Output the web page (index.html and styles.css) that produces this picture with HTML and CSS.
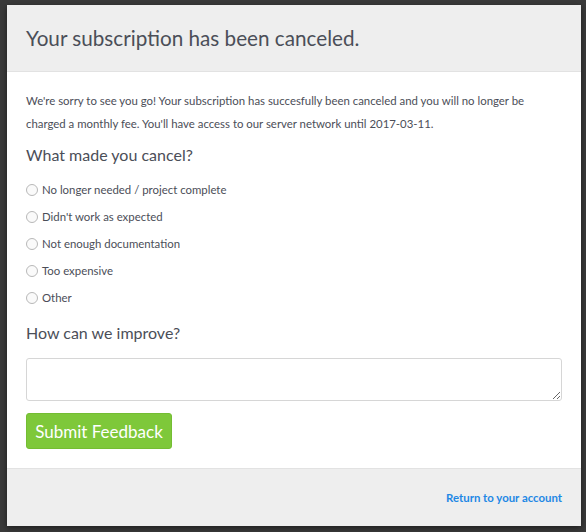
FILE: index.html
```html
<!DOCTYPE html>
<html>
<head>
<meta charset="utf-8">
<link rel="stylesheet" href="styles.css">
</head>
<body>
<div class="backdrop">
  <div class="modal">
    <div class="modal-header">
      <h1 class="title">Your subscription has been canceled.</h1>
    </div>
    <div class="modal-body">
      <p class="intro">We're sorry to see you go! Your subscription has succesfully been canceled and you will no longer be charged a monthly fee. You'll have access to our server network until 2017-03-11.</p>
      <h2 class="question first">What made you cancel?</h2>
      <ul class="reasons">
        <li class="reason"><span class="radio"></span><span class="reason-label">No longer needed / project complete</span></li>
        <li class="reason"><span class="radio"></span><span class="reason-label">Didn't work as expected</span></li>
        <li class="reason"><span class="radio"></span><span class="reason-label">Not enough documentation</span></li>
        <li class="reason"><span class="radio"></span><span class="reason-label">Too expensive</span></li>
        <li class="reason"><span class="radio"></span><span class="reason-label">Other</span></li>
      </ul>
      <h2 class="question improve">How can we improve?</h2>
      <textarea class="feedback"></textarea>
      <button class="submit">Submit Feedback</button>
    </div>
    <div class="modal-footer">
      <a class="return-link" href="#">Return to your account</a>
    </div>
  </div>
</div>
</body>
</html>
```

FILE: styles.css
```css
* { box-sizing: border-box; }
html, body {
  margin: 0;
  padding: 0;
  background: #3a3a3a;
  width: 586px;
  height: 532px;
  overflow: hidden;
}
.backdrop {
  padding: 5px 5px 0 7px;
  font-family: Lato, "Liberation Sans", sans-serif;
}
.modal {
  width: 574px;
  height: 521px;
  background: #fff;
  display: flex;
  flex-direction: column;
  box-shadow: 0 2px 6px rgba(0,0,0,0.5);
}
.modal-header {
  height: 67px;
  background: #eeeeee;
  border-bottom: 1px solid #e2e2e2;
  padding: 0 19px;
  display: flex;
  align-items: center;
}
.title {
  margin: 0;
  font-size: 20.7px;
  font-weight: 400;
  color: #4b4e58;
}
.modal-body {
  flex: 1;
  padding: 17px 19px 0 19px;
  color: #4b4e58;
}
.intro {
  margin: 0;
  font-size: 11.4px;
  line-height: 23px;
}
.question {
  margin: 8px 0 8px;
  font-size: 16px;
  font-weight: 400;
  line-height: 24px;
}
.first {
  margin-bottom: 9px;
}
.reasons {
  list-style: none;
  margin: 0;
  padding: 0;
}
.reason {
  display: flex;
  align-items: center;
  gap: 4px;
  height: 27px;
  font-size: 11.4px;
}
.radio {
  width: 12px;
  height: 12px;
  border-radius: 50%;
  border: 1px solid #b8b8b8;
  background: #fafafa;
}
.improve {
  margin-top: 10px;
  margin-bottom: 13px;
}
.feedback {
  display: block;
  width: 536px;
  height: 43px;
  border: 1px solid #d6d6d6;
  border-radius: 3px;
  resize: vertical;
  margin: 0 0 12px;
}
.submit {
  display: block;
  width: 146px;
  height: 36px;
  background: #7ec83a;
  border: 1px solid #74bd33;
  border-radius: 3px;
  color: #fff;
  font-family: inherit;
  font-size: 17px;
  padding: 0;
}
.modal-footer {
  height: 58px;
  background: #eeeeee;
  border-top: 1px solid #e2e2e2;
  display: flex;
  justify-content: flex-end;
  align-items: center;
  padding: 0 19px;
}
.return-link {
  color: #1e88e5;
  text-decoration: none;
  font-size: 11.4px;
  font-weight: 700;
}
```
